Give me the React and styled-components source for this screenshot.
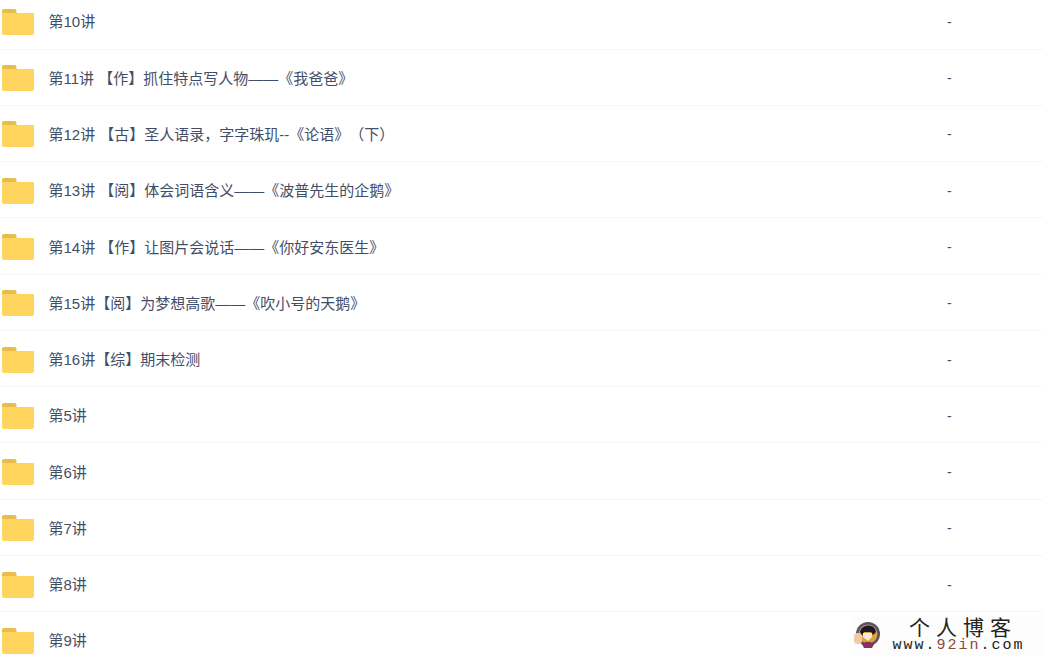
import React from "react";
import styled, { createGlobalStyle } from "styled-components";

const GlobalStyle = createGlobalStyle`
  html, body {
    margin: 0;
    height: 100%;
    overflow: hidden;
    background: #fff;
  }
`;

const Page = styled.div`
  position: relative;
  width: 1043px;
  height: 657px;
  overflow: hidden;
  font-family: "Liberation Sans", "Noto Sans CJK SC", sans-serif;
`;

const List = styled.ul`
  list-style: none;
  margin: -6.7px 0 0;
  padding: 0;
`;

const Row = styled.li`
  height: 56.27px;
  box-sizing: border-box;
  display: flex;
  align-items: center;
  padding: 2px 0 0 2px;
  border-bottom: 1px solid #f5f6fa;
`;

const Name = styled.span`
  flex: 1;
  margin: 0 0 2px 14.5px;
  font-size: 15px;
  color: #424e67;
  white-space: pre;
  text-spacing-trim: space-all;
`;

const Size = styled.span`
  width: 96px;
  font-size: 14px;
  color: #424e67;
`;

const Watermark = styled.div`
  position: absolute;
  right: 0;
  bottom: 2px;
  width: 193px;
  height: 40px;
  display: flex;
  align-items: center;
  background: #fdfdfd;
`;

const Badge = styled.svg`
  width: 28px;
  height: 28px;
  margin-left: 3px;
  flex: none;
`;

const Brand = styled.div`
  flex: 1;
  display: flex;
  flex-direction: column;
  align-items: center;
  color: #222;
`;

const BrandTitle = styled.div`
  font-size: 21px;
  line-height: 20px;
  letter-spacing: 6px;
  margin-left: 2px;
`;

const BrandUrl = styled.div`
  font-family: "Liberation Mono", monospace;
  font-size: 15px;
  line-height: 15px;
  letter-spacing: 2px;
  margin-right: 7px;
`;

const BrandAccent = styled.span`
  color: #8a4a3c;
`;

const FolderIcon = () => (
  <svg width="32" height="26" viewBox="0 0 32 26">
    <path d="M0 2a2 2 0 0 1 2-2h10.5a2 2 0 0 1 2 2v2H0z" fill="#e8bd4c" />
    <path d="M0 4h32v20a2 2 0 0 1-2 2H2a2 2 0 0 1-2-2z" fill="#ffd45f" />
  </svg>
);

const rows = [
  { name: "第10讲", size: "-" },
  { name: "第11讲 【作】抓住特点写人物——《我爸爸》", size: "-" },
  { name: "第12讲 【古】圣人语录，字字珠玑--《论语》（下）", size: "-" },
  { name: "第13讲 【阅】体会词语含义——《波普先生的企鹅》", size: "-" },
  { name: "第14讲 【作】让图片会说话——《你好安东医生》", size: "-" },
  { name: "第15讲【阅】为梦想高歌——《吹小号的天鹅》", size: "-" },
  { name: "第16讲【综】期末检测", size: "-" },
  { name: "第5讲", size: "-" },
  { name: "第6讲", size: "-" },
  { name: "第7讲", size: "-" },
  { name: "第8讲", size: "-" },
  { name: "第9讲", size: "" },
];

export default function App() {
  return (
    <Page>
      <GlobalStyle />
      <List>
        {rows.map((row) => (
          <Row key={row.name}>
            <FolderIcon />
            <Name>{row.name}</Name>
            <Size>{row.size}</Size>
          </Row>
        ))}
      </List>
      <Watermark>
        <Badge viewBox="0 0 28 28">
          <circle cx="15" cy="13" r="12" fill="#5b4f6b" />
          <circle cx="15" cy="13" r="9.5" fill="#d9a53c" />
          <path d="M7 11c1-8 15-9 16 0l-3 3-2-3H11l-2 4z" fill="#1c1a24" />
          <path d="M10 12h9v4l-4 4-5-4z" fill="#f8ead8" />
          <path d="M9 23c3-3 9-3 12 0l-2 4h-8z" fill="#8a2f5a" />
          <rect x="1" y="12" width="8" height="11" rx="3.5" fill="#f2c9a2" />
        </Badge>
        <Brand>
          <BrandTitle>个人博客</BrandTitle>
          <BrandUrl>
            www.<BrandAccent>92in</BrandAccent>.com
          </BrandUrl>
        </Brand>
      </Watermark>
    </Page>
  );
}
